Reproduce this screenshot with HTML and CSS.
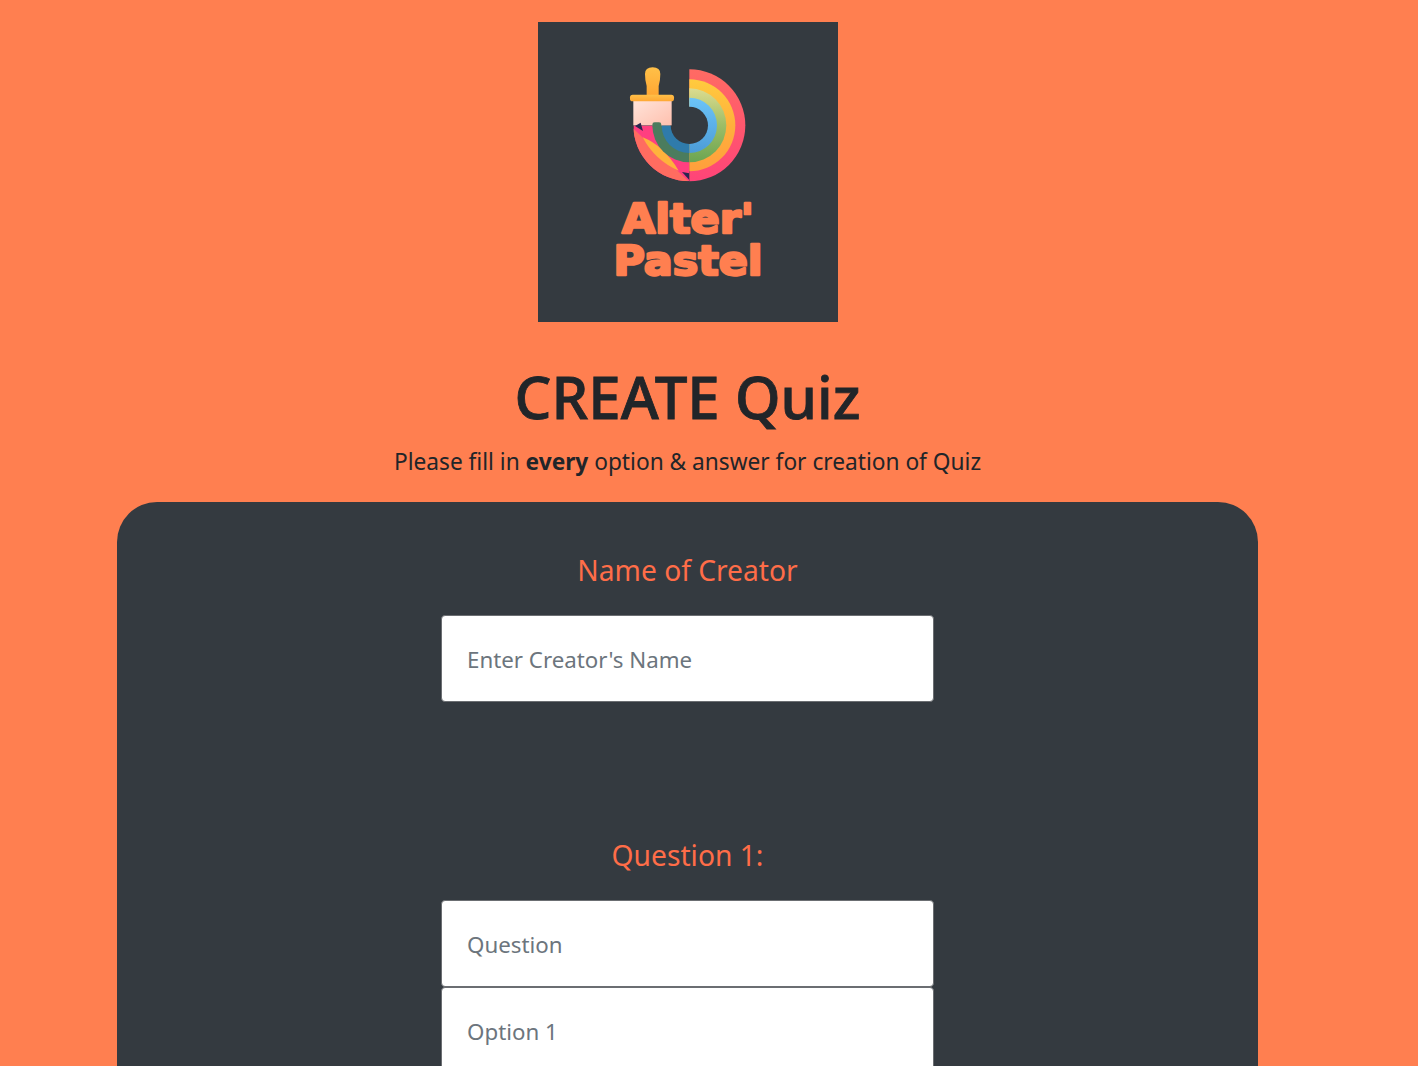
FILE: index.html
```html
<!DOCTYPE html>
<html lang="en">
<head>
<meta charset="utf-8">
<title>CREATE Quiz</title>
<link rel="stylesheet" href="styles.css">
</head>
<body>
<main class="page">
  <svg class="logo" viewBox="0 0 300 300" width="300" height="300" role="img" aria-label="Alter' Pastel logo">
    <defs>
      <linearGradient id="r1" x1="0" y1="0" x2="0" y2="1"><stop offset="0" stop-color="#ff6b63"/><stop offset="1" stop-color="#ff4478"/></linearGradient>
      <linearGradient id="r2" x1="0" y1="0" x2="0" y2="1"><stop offset="0" stop-color="#ffcb3e"/><stop offset="0.5" stop-color="#ffb03c"/><stop offset="1" stop-color="#ff9f3c"/></linearGradient>
      <linearGradient id="r3" x1="0" y1="0" x2="0" y2="1"><stop offset="0" stop-color="#dcdc90"/><stop offset="0.5" stop-color="#9dbd66"/><stop offset="1" stop-color="#6aa552"/></linearGradient>
      <linearGradient id="r4" x1="0" y1="0" x2="0" y2="1"><stop offset="0" stop-color="#6cc4f8"/><stop offset="1" stop-color="#4c9cd8"/></linearGradient>
      <linearGradient id="h" x1="0" y1="0" x2="0" y2="1"><stop offset="0" stop-color="#ffc048"/><stop offset="1" stop-color="#ffa733"/></linearGradient>
      <linearGradient id="b" x1="0" y1="0" x2="1" y2="1"><stop offset="0" stop-color="#ffe4da"/><stop offset="1" stop-color="#ffc0ae"/></linearGradient>
      <clipPath id="right"><rect x="268" y="40" width="180" height="370"/></clipPath>
      <clipPath id="quad"><path d="M100 226H268V394A168 168 0 0 1 100 226Z"/></clipPath>
    </defs>
    <g transform="translate(62 28) scale(.3333)">
      <g clip-path="url(#right)">
        <circle cx="268" cy="226" r="168" fill="url(#r1)"/>
        <circle cx="268" cy="226" r="138" fill="url(#r2)"/>
        <circle cx="268" cy="226" r="111" fill="url(#r3)"/>
        <circle cx="268" cy="226" r="83" fill="url(#r4)"/>
      </g>
      <g clip-path="url(#quad)">
        <rect x="100" y="226" width="168" height="168" fill="#ff3f80"/>
        <polygon points="90,226 268,396 90,396" fill="#ff6c60"/>
        <path d="M128 262Q190 286 236 362Q165 332 128 262Z" fill="#ffb23c"/>
        <circle cx="268" cy="226" r="111" fill="#4b7c5e"/>
        <circle cx="268" cy="226" r="83" fill="#2f7bab"/>
        <polygon points="246,366 268,370 268,390" fill="#2a2650"/>
      </g>
      <circle cx="268" cy="226" r="56" fill="#343a40"/>
      <path d="M135 72Q135 52 158 52Q181 52 181 72Q181 92 176 108V136H140V108Q135 92 135 72Z" fill="url(#h)"/>
      <rect x="100" y="150" width="115" height="76" fill="url(#b)"/>
      <rect x="90" y="134" width="132" height="20" rx="8" fill="url(#h)"/>
      <rect x="157" y="217" width="27" height="14" rx="7" fill="#4b7c5e"/>
      <polygon points="105,228 122,218 129,243" fill="#2a2650"/>
    </g>
    <text class="logo-text" x="150" y="211" textLength="132" lengthAdjust="spacingAndGlyphs">Alter'</text>
    <text class="logo-text" x="150" y="253" textLength="149" lengthAdjust="spacingAndGlyphs">Pastel</text>
  </svg>

  <h1 class="title">CREATE Quiz</h1>
  <p class="lead">Please fill in <strong>every</strong> option &amp; answer for creation of Quiz</p>

  <form class="card">
    <section class="group group-creator">
      <h2 class="label">Name of Creator</h2>
      <input class="field" type="text" placeholder="Enter Creator's Name">
    </section>
    <section class="group">
      <h2 class="label">Question 1:</h2>
      <input class="field" type="text" placeholder="Question">
      <input class="field" type="text" placeholder="Option 1">
    </section>
  </form>
</main>
</body>
</html>
```
FILE: styles.css
```css
* { box-sizing: border-box; }
html, body { margin: 0; height: 1066px; overflow: hidden; }
body {
  background: #ff7f50;
  color: #212529;
  font-family: "Noto Sans", "Open Sans", sans-serif;
}
.page {
  width: 1375px;
  display: flex;
  flex-direction: column;
  align-items: center;
  padding-top: 22px;
}
.logo { display: block; background: #343a40; flex: none; }
.logo-text {
  fill: #ff7f50;
  stroke: #ff7f50;
  stroke-width: 2.4px;
  stroke-linejoin: round;
  font-family: "DejaVu Sans", sans-serif;
  font-weight: 700;
  font-size: 40px;
  text-anchor: middle;
}
.title {
  margin: 39px 0 0;
  font-size: 58.2px;
  line-height: 72px;
  font-weight: 500;
  -webkit-text-stroke: 0.8px #212529;
  text-align: center;
}
.lead {
  margin: 13px 0 0;
  font-size: 22.7px;
  line-height: 32px;
  font-weight: 400;
  text-align: center;
}
.card {
  width: 1141px;
  height: 700px;
  margin-top: 24px;
  background: #343a40;
  border-radius: 40px;
  padding-top: 47px;
  display: flex;
  flex-direction: column;
  align-items: center;
}
.group { display: flex; flex-direction: column; align-items: center; }
.group-creator { margin-bottom: 132px; }
.label {
  margin: 0 0 24px;
  font-size: 28.2px;
  line-height: 42px;
  font-weight: 400;
  color: #ff6d48;
}
.field {
  display: block;
  width: 493px;
  height: 87px;
  padding: 2px 25px 0;
  border: 1px solid #6b6e72;
  border-radius: 4px;
  background: #fff;
  font: inherit;
  font-size: 22.3px;
}
.field::placeholder { color: #6c757d; opacity: 1; }
```
